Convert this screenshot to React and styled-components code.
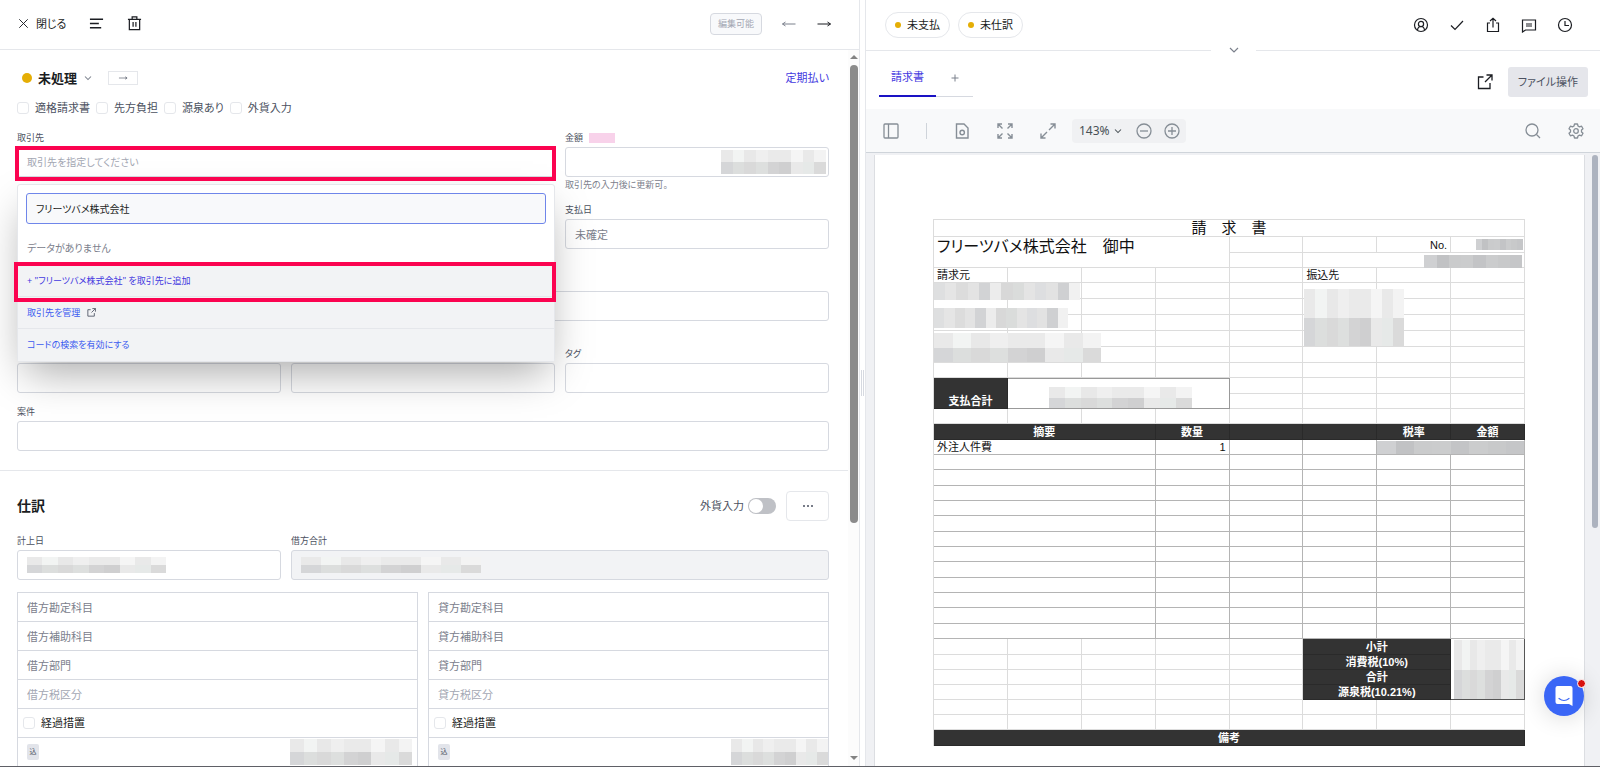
import React, { useState } from "react";
import styled, { createGlobalStyle, css } from "styled-components";

const colors = {
  black: "#1b1d22",
  text: "#4b5160",
  muted: "#7b808c",
  placeholder: "#a3a7b3",
  line: "#e5e7eb",
  border: "#d6d9e0",
  fill: "#f2f3f5",
  link: "#4338e0",
  blue: "#3b5bf0",
  amber: "#e5ae05",
  marker: "#fb0350",
  sheetDark: "#333333",
};

const GlobalStyle = createGlobalStyle`
  *, *::before, *::after {
    box-sizing: border-box;
  }
  body {
    margin: 0;
    background: #fff;
    color: ${colors.text};
    font-family: "Noto Sans", "Noto Sans CJK JP", sans-serif;
    font-size: 11px;
    line-height: 16px;
    font-feature-settings: "palt";
  }
  button, input {
    font: inherit;
    color: inherit;
    font-feature-settings: inherit;
  }
`;

/* ---------- shared ---------- */

const Svg = styled.svg`
  display: block;
  flex: none;
  width: ${({ $size }) => $size || 16}px;
  height: ${({ $size }) => $size || 16}px;
  fill: none;
  stroke: currentColor;
  stroke-width: ${({ $stroke }) => $stroke || 1};
`;

const icons = {
  close: <path d="M3.500 3.500l9 9M12.500 3.500l-9 9" />,
  lines: <path d="M1 3.500h14M1 8h9.500M1 12.500h12" />,
  trash: (
    <path d="M2.500 4v10.500h11V4M1 3.500h14M5.500 3V1h5v2M6.500 6.500v5M9.500 6.500v5" />
  ),
  left: <path d="M1.500 8h13M4.500 6L1.500 8l3 2" />,
  right: <path d="M1.500 8h13M11.500 6l3 2-3 2" />,
  down: <path d="M4 6l4 4 4-4" />,
  user: (
    <>
      <circle cx="8" cy="8" r="6.500" />
      <circle cx="8" cy="7" r="2.600" />
      <path d="M4.500 13c.3-2.400 1.500-3.500 3.500-3.500s3.200 1.100 3.500 3.500" />
    </>
  ),
  check: <path d="M2 8.500l4 4 8-8.500" />,
  share: <path d="M5 6H2.500v8.500h11V6H11M8 10.500V1.500M5 4l3-2.800L11 4" />,
  comment: (
    <path d="M1.500 3h13v10h-10l-3 2V3zM5 7h6M5 9h6" />
  ),
  clock: (
    <>
      <circle cx="8" cy="8" r="6.500" />
      <path d="M8 4v4.500h4" />
    </>
  ),
  external: <path d="M6.500 3H1.500v11.500H13V9M9.500 1H15v5.500M15 1L8 8" />,
  plus: <path d="M4.500 8h7M8 4.500v7" />,
  sidebar: (
    <>
      <rect x="1" y="1" width="14" height="14" rx="1" />
      <path d="M5.500 1v14" />
    </>
  ),
  page: (
    <>
      <path d="M2.500 1H10l4 4v10H2.500z" />
      <circle cx="8.200" cy="9.500" r="2.200" />
    </>
  ),
  fit: (
    <path d="M1 5V1h4M11 1h4v4M15 11v4h-4M5 15H1v-4M1.500 1.500l4 4M14.500 1.500l-4 4M14.500 14.500l-4-4M1.500 14.500l4-4" />
  ),
  expand: (
    <path d="M10.500 1H15v4.500M1 10.500V15h4.500M14.500 1.500L9 7M1.500 14.500L7 9" />
  ),
  zoomOut: (
    <>
      <circle cx="8" cy="8" r="7" />
      <path d="M4 8h8" />
    </>
  ),
  zoomIn: (
    <>
      <circle cx="8" cy="8" r="7" />
      <path d="M4 8h8M8 4v8" />
    </>
  ),
  search: (
    <>
      <circle cx="7" cy="7" r="6" />
      <path d="M11.500 11.500L15 15" />
    </>
  ),
  gear: (
    <>
      <path
        strokeLinejoin="round"
        d="M6.500 1h3l.5 2 1.500.9 2.100-.7 1.400 2.500L13.500 7v2l1.500 1.300-1.400 2.500-2.100-.7L10 13l-.5 2h-3L6 13l-1.500-.9-2.100.7L1 10.300 2.500 9V7L1 5.700l1.400-2.500 2.100.7L6 3z"
      />
      <circle cx="8" cy="8" r="2.300" />
    </>
  ),
};

const Icon = ({ name, size, stroke }) => (
  <Svg viewBox="0 0 16 16" $size={size} $stroke={stroke} aria-hidden="true">
    {icons[name]}
  </Svg>
);

const IconButton = styled.button`
  display: flex;
  align-items: center;
  gap: 5px;
  padding: 0;
  border: 0;
  background: none;
  color: ${({ $color }) => $color || colors.black};
`;

const Dot = styled.span`
  flex: none;
  width: ${({ $size }) => $size}px;
  height: ${({ $size }) => $size}px;
  border-radius: 50%;
  background: ${colors.amber};
`;

/* Hidden values are drawn as rows of flat grey tiles. */
const MosaicBox = styled.span`
  display: flex;
  flex-direction: column;
  width: ${({ $w }) => $w}px;
  height: ${({ $h }) => $h}px;
  ${({ $over, $x, $y }) =>
    $over &&
    css`
      position: absolute;
      z-index: 1;
      left: ${$x}px;
      top: ${$y}px;
    `}
`;

const MosaicRow = styled.span`
  flex: 1;
  display: flex;
`;

const Tile = styled.span`
  flex: 1;
  background: ${({ $tone }) => $tone};
`;

const light = "#e9e9e9 #f2f4f3 #e8e8e8 #efefef #eaeaea #eaeaea #f5f5f5 #e9e9e9 #f3f3f3".split(" ");
const dark = "#d5d6d8 #dcdedd #d9d9d9 #dddfde #d3d3d4 #cfcfd0 #e9e9e9 #e6e9e8 #dadada".split(" ");
const soft = "#dedfe0 #e5e5e5 #dcdcdc #e3e3e3 #d2d3d5 #ececec #d8d8d8 #dadcdb #e4e4e4 #dddee0 #e2e2e2 #cfd0d2 #f1f1f1".split(" ");
const solid = "#cfd0d2 #c1c2c4 #cacbcc #cbcccd #c3c4c6 #cbcccd #c8c9ca #c5c6c8".split(" ");

const Mosaic = ({ rows = [light, dark], ...rest }) => (
  <MosaicBox {...rest}>
    {rows.map((row, i) => (
      <MosaicRow key={i}>
        {row.map((tone, j) => (
          <Tile key={j} $tone={tone} />
        ))}
      </MosaicRow>
    ))}
  </MosaicBox>
);

/* ---------- page frame ---------- */

const Screen = styled.div`
  display: flex;
  height: 100vh;
  overflow: hidden;
  border-bottom: 1px solid #5f6066;
`;

const LeftPane = styled.main`
  display: flex;
  flex-direction: column;
  width: 53.75%;
  min-width: 0;
  border-right: 1px solid ${colors.line};
`;

const RightPane = styled.section`
  display: flex;
  flex-direction: column;
  flex: 1;
  min-width: 0;
  border-left: 1px solid ${colors.line};
`;

const Splitter = styled.div`
  flex: none;
  display: flex;
  align-items: center;
  justify-content: center;
  width: 5px;

  &::after {
    content: "";
    width: 3px;
    height: 26px;
    border: solid ${colors.border};
    border-width: 0 1px;
  }
`;

/* ---------- left pane ---------- */

const LeftHeader = styled.header`
  flex: none;
  display: flex;
  align-items: center;
  height: 50px;
  padding: 0 27px 2px 16px;
  border-bottom: 1px solid ${colors.line};
`;

const HeaderGroup = styled.div`
  display: flex;
  align-items: center;
  gap: ${({ $gap }) => $gap}px;
  ${({ $end }) => $end && "margin-left: auto;"}
`;

const EditBadge = styled.span`
  padding: 1px 7px;
  border: 1px solid ${colors.border};
  border-radius: 4px;
  background: #f8f9fb;
  color: ${colors.placeholder};
  font-size: 9px;
  line-height: 18px;
`;

const ScrollArea = styled.div`
  flex: 1;
  display: flex;
  min-height: 0;
`;

const Content = styled.div`
  flex: 1;
  min-width: 0;
  overflow: hidden;
`;

const Scrollbar = styled.div`
  flex: none;
  display: flex;
  flex-direction: column;
  align-items: center;
  justify-content: space-between;
  width: 11px;
  padding: 5px 0 6px;
  background: #fcfcfc;
`;

const Thumb = styled.div`
  width: ${({ $w }) => $w}px;
  height: ${({ $h }) => $h};
  border-radius: 4px;
  background: ${({ $color }) => $color};
`;

const Caret = styled.span`
  flex: none;
  border: solid transparent;
  border-width: 0 4px;
  ${({ $up }) =>
    $up
      ? "border-bottom: 4px solid #838383; margin-bottom: 6px;"
      : "border-top: 4px solid #838383; margin-top: auto;"}
`;

const Section = styled.section`
  padding: ${({ $top }) => $top}px 19px 19px 17px;
  & + & {
    border-top: 1px solid ${colors.line};
  }
`;

const StatusRow = styled.div`
  display: flex;
  align-items: center;
  height: 18px;
  padding-left: 5px;
`;

const StatusButton = styled.button`
  display: flex;
  align-items: center;
  gap: 6px;
  padding: 0;
  border: 0;
  background: none;
  color: ${colors.black};
  font-size: 13px;
  font-weight: 700;

  svg {
    margin-left: -1px;
    color: ${colors.muted};
  }
`;

const NextButton = styled.button`
  display: flex;
  align-items: center;
  justify-content: center;
  width: 30px;
  height: 14px;
  margin-left: 14px;
  padding: 0;
  border: 1px solid ${colors.line};
  background: #fff;
`;

const TextLink = styled.a`
  color: ${({ $color }) => $color || colors.link};
  text-decoration: none;
  ${({ $end }) => $end && "margin-left: auto;"}
`;

const Checks = styled.div`
  display: flex;
  gap: 6px;
  margin: 13px 0 15px;
`;

const CheckLabel = styled.label`
  display: flex;
  align-items: center;
  gap: 6px;
  color: ${({ $strong }) => ($strong ? colors.black : colors.text)};
`;

const Checkbox = styled.input.attrs({ type: "checkbox" })`
  appearance: none;
  width: 12px;
  height: 12px;
  margin: 0;
  border: 1px solid ${colors.line};
  border-radius: 3px;
  background: #fff;
`;

const FieldGrid = styled.div`
  display: grid;
  grid-template-columns: repeat(3, 1fr);
  column-gap: 10px;
  row-gap: 12px;
`;

const FieldBox = styled.div`
  position: relative;
  grid-column: span ${({ $span }) => $span || 1};
`;

const FieldLabel = styled.label`
  display: flex;
  align-items: center;
  gap: 6px;
  height: 14px;
  margin-bottom: 2px;
  font-size: 9px;
`;

const PinkTag = styled.span`
  width: 26px;
  height: 10px;
  background: #f8d2ea;
`;

const control = css`
  display: flex;
  align-items: center;
  width: 100%;
  height: 30px;
  padding: 0 9px;
  border: 1px solid ${colors.border};
  border-radius: 3px;
  background: ${({ $filled }) => ($filled ? colors.fill : "#fff")};
  text-align: left;
`;

const TextInput = styled.input`
  ${control}
  &::placeholder {
    color: ${colors.muted};
  }
`;

const ValueBox = styled.div`
  ${control}
  ${({ $right }) => $right && "justify-content: flex-end; padding: 0 2px;"}
`;

const SelectButton = styled.button`
  ${control}
  color: ${colors.placeholder};
  font-size: 10px;
`;

const Hint = styled.div`
  height: 14px;
  color: ${colors.muted};
  font-size: 9px;
  line-height: 16px;
`;

const Anchor = styled.div`
  position: relative;
`;

const Marker = styled.span`
  position: absolute;
  z-index: 3;
  inset: ${({ $inset }) => $inset};
  border: 4px solid ${colors.marker};
  pointer-events: none;
`;

const Dropdown = styled.div`
  position: absolute;
  z-index: 2;
  top: 37px;
  left: 0;
  right: 0;
  border: 1px solid ${colors.line};
  border-radius: 3px;
  background: #fff;
  box-shadow: 0 18px 40px -8px rgba(0, 0, 0, 0.34);
`;

const DropdownSearch = styled.div`
  padding: 8px;
`;

const SearchInput = styled.input`
  ${control}
  height: 31px;
  border-color: #6f86ea;
  background: #f8f9fb;
  color: ${colors.black};
  font-size: 10px;
  outline: 0;
`;

const Empty = styled.div`
  padding: 8px 9px 9px;
  color: ${colors.muted};
  font-size: 10px;
`;

const Option = styled.div`
  position: relative;
  display: flex;
  align-items: center;
  gap: 7px;
  height: 32px;
  padding: 0 9px;
  border-bottom: 1px solid ${colors.line};
  background: ${colors.fill};
  font-size: 9px;

  &:last-child {
    border-bottom: 0;
  }
`;

const OptionButton = styled.button`
  padding: 0;
  border: 0;
  background: none;
  color: ${({ $color }) => $color || colors.blue};
`;

const SectionHead = styled.div`
  display: flex;
  align-items: center;
  height: 30px;
  margin-bottom: 13px;
`;

const Heading = styled.h2`
  margin: 0 auto 0 0;
  color: ${colors.black};
  font-size: 14px;
`;

const SwitchLabel = styled.label`
  display: flex;
  align-items: center;
  gap: 4px;
`;

const Switch = styled.input.attrs({ type: "checkbox", role: "switch" })`
  appearance: none;
  width: 28px;
  height: 16px;
  margin: 0;
  padding: 1px;
  border-radius: 8px;
  background: #bfc1c6;

  &::before {
    content: "";
    display: block;
    width: 14px;
    height: 14px;
    border-radius: 50%;
    background: #fff;
  }
`;

const MoreButton = styled.button`
  display: flex;
  align-items: center;
  justify-content: center;
  gap: 2px;
  width: 43px;
  height: 30px;
  margin-left: 10px;
  border: 1px solid ${colors.line};
  border-radius: 4px;
  background: #fff;

  span {
    width: 2px;
    height: 2px;
    border-radius: 50%;
    background: ${colors.text};
  }
`;

const EntryGrid = styled.div`
  display: grid;
  grid-template-columns: 1fr 1fr;
  gap: 10px;
  margin-top: 12px;
`;

const EntryColumn = styled.div`
  border: 1px solid ${colors.border};
`;

const entryLine = css`
  display: flex;
  align-items: center;
  width: 100%;
  height: 29px;
  border: 0;
  border-bottom: 1px solid ${colors.border};
`;

const EntryInput = styled.input`
  ${entryLine}
  padding: 0 9px;
  &::placeholder {
    color: ${({ $faint }) => ($faint ? colors.placeholder : colors.muted)};
  }
`;

const EntryLine = styled.div`
  ${entryLine}
  justify-content: space-between;
  padding: 0 ${({ $right }) => $right || 0}px 0 ${({ $left }) => $left}px;
`;

const TaxBadge = styled.span`
  width: 12px;
  border-radius: 2px;
  background: #e2e4ea;
  font-size: 7px;
  text-align: center;
`;

const Field = ({ id, label, span, hint, children }) => (
  <FieldBox $span={span}>
    <FieldLabel htmlFor={id}>{label}</FieldLabel>
    {children || <TextInput id={id} />}
    {hint !== undefined && <Hint>{hint}</Hint>}
  </FieldBox>
);

const PartnerSelect = () => {
  const [keyword, setKeyword] = useState("フリーツバメ株式会社");

  return (
    <Anchor>
      <SelectButton id="partner" aria-haspopup="listbox" aria-expanded="true">
        取引先を指定してください
      </SelectButton>
      <Marker $inset="-1px -1px -4px -2px" />
      <Dropdown>
        <DropdownSearch>
          <SearchInput
            aria-label="取引先"
            value={keyword}
            onChange={(e) => setKeyword(e.target.value)}
          />
        </DropdownSearch>
        <Empty>データがありません</Empty>
        <Option>
          <OptionButton $color={colors.link}>
            + "{keyword}" を取引先に追加
          </OptionButton>
          <Marker $inset="-3px -2px -6px -4px" />
        </Option>
        <Option>
          <TextLink href="#partners" $color={colors.blue}>
            取引先を管理
          </TextLink>
          <Icon name="external" size={9} stroke={1.5} />
        </Option>
        <Option>
          <OptionButton>コードの検索を有効にする</OptionButton>
        </Option>
      </Dropdown>
    </Anchor>
  );
};

const Entry = ({ side, mosaicWidth, right }) => (
  <EntryColumn>
    {["勘定科目", "補助科目", "部門", "税区分"].map((name) => (
      <EntryInput
        key={name}
        aria-label={side + name}
        placeholder={side + name}
        $faint={name === "税区分"}
      />
    ))}
    <EntryLine $left={5}>
      <CheckLabel $strong>
        <Checkbox />
        経過措置
      </CheckLabel>
    </EntryLine>
    <EntryLine $left={9} $right={right}>
      <TaxBadge>込</TaxBadge>
      <Mosaic $w={mosaicWidth} $h={26} />
    </EntryLine>
  </EntryColumn>
);

const LeftSide = () => (
  <LeftPane>
    <LeftHeader>
      <HeaderGroup $gap={23}>
        <IconButton>
          <Icon name="close" size={15} />
          閉じる
        </IconButton>
        <IconButton aria-label="メニュー">
          <Icon name="lines" size={15} stroke={1.5} />
        </IconButton>
        <IconButton aria-label="削除">
          <Icon name="trash" size={15} stroke={1.3} />
        </IconButton>
      </HeaderGroup>
      <HeaderGroup $gap={19} $end>
        <EditBadge>編集可能</EditBadge>
        <IconButton aria-label="前へ" $color={colors.muted}>
          <Icon name="left" />
        </IconButton>
        <IconButton aria-label="次へ">
          <Icon name="right" />
        </IconButton>
      </HeaderGroup>
    </LeftHeader>

    <ScrollArea>
      <Content>
        <Section $top={19}>
          <StatusRow>
            <StatusButton>
              <Dot $size={10} />
              未処理
              <Icon name="down" size={12} stroke={1.4} />
            </StatusButton>
            <NextButton aria-label="進める">
              <Icon name="right" size={10} />
            </NextButton>
            <TextLink href="#recurring" $end>
              定期払い
            </TextLink>
          </StatusRow>
          <Checks>
            {["適格請求書", "先方負担", "源泉あり", "外貨入力"].map((name) => (
              <CheckLabel key={name}>
                <Checkbox />
                {name}
              </CheckLabel>
            ))}
          </Checks>
          <FieldGrid>
            <Field id="partner" label="取引先" span={2} hint="">
              <PartnerSelect />
            </Field>
            <Field
              label={
                <>
                  金額
                  <PinkTag />
                </>
              }
              hint="取引先の入力後に更新可。"
            >
              <ValueBox $right>
                <Mosaic $w={105} $h={24} />
              </ValueBox>
            </Field>
            <FieldBox $span={2} />
            <Field id="payday" label="支払日" hint="">
              <TextInput id="payday" placeholder="未確定" />
            </Field>
            <Field id="memo" span={3} hint="" />
            <Field id="owner" />
            <Field id="dept" />
            <Field id="tag" label="タグ" />
            <Field id="project" label="案件" span={3} />
          </FieldGrid>
        </Section>

        <Section $top={20}>
          <SectionHead>
            <Heading>仕訳</Heading>
            <SwitchLabel>
              外貨入力
              <Switch />
            </SwitchLabel>
            <MoreButton aria-label="その他">
              <span />
              <span />
              <span />
            </MoreButton>
          </SectionHead>
          <FieldGrid>
            <Field label="計上日">
              <ValueBox>
                <Mosaic $w={139} $h={16} />
              </ValueBox>
            </Field>
            <Field label="借方合計" span={2}>
              <ValueBox $filled>
                <Mosaic $w={180} $h={16} />
              </ValueBox>
            </Field>
          </FieldGrid>
          <EntryGrid>
            <Entry side="借方" mosaicWidth={122} right={5} />
            <Entry side="貸方" mosaicWidth={97} />
          </EntryGrid>
        </Section>
      </Content>
      <Scrollbar>
        <Caret $up />
        <Thumb $w={8} $h="65%" $color="#8b8b8b" />
        <Caret />
      </Scrollbar>
    </ScrollArea>
  </LeftPane>
);

/* ---------- right pane ---------- */

const RightHeader = styled.header`
  position: relative;
  flex: none;
  display: flex;
  align-items: center;
  gap: 8px;
  height: 51px;
  padding: 0 27px 0 19px;
  border-bottom: 1px solid ${colors.line};
`;

const Chip = styled.span`
  display: flex;
  align-items: center;
  gap: 6px;
  height: 26px;
  padding: 0 9px;
  border: 1px solid ${colors.line};
  border-radius: 13px;
  color: ${colors.black};
`;

const Collapse = styled.button`
  position: absolute;
  left: 50%;
  bottom: -8px;
  display: flex;
  justify-content: center;
  width: 45px;
  margin-left: -22px;
  padding: 0;
  border: 0;
  background: #fff;
  color: ${colors.muted};
`;

const TabBar = styled.div`
  flex: none;
  display: flex;
  align-items: center;
  gap: 15px;
  height: 58px;
  padding: 4px 12px 0 13px;
`;

const Tabs = styled.div`
  display: flex;
  align-self: flex-start;
  height: 42px;
  margin-right: auto;
  padding-top: 4px;
`;

const Tab = styled.button`
  padding: 0 12px;
  border: 0;
  border-bottom: 2px solid #1a12c4;
  background: none;
  color: ${colors.link};
`;

const AddTab = styled(IconButton)`
  width: 37px;
  justify-content: center;
  border-bottom: 1px solid ${colors.border};
`;

const FileButton = styled.button`
  height: 30px;
  padding: 0 10px;
  border: 0;
  border-radius: 3px;
  background: #e5e6eb;
  color: ${colors.text};
`;

const Toolbar = styled.div`
  flex: none;
  display: flex;
  align-items: center;
  gap: 27px;
  height: 44px;
  padding: 0 16px 0 17px;
  border-bottom: 1px solid #cfd4da;
  background: #f8f9fa;
  color: #868e96;
`;

const Divider = styled.span`
  width: 1px;
  height: 16px;
  background: #cfd4da;
`;

const ZoomGroup = styled.div`
  display: flex;
  align-items: center;
  gap: 12px;
  height: 24px;
  margin: 0 auto 0 -11px;
  padding: 0 6px 0 7px;
  border-radius: 4px;
  background: #f0f1f3;
`;

const ZoomValue = styled.button`
  display: flex;
  align-items: center;
  gap: 2px;
  padding: 0;
  border: 0;
  background: none;
  color: #485056;
  font-size: 12px;
`;

const Viewer = styled.div`
  flex: 1;
  display: flex;
  min-height: 0;
  padding: 2px 2px 0 8px;
  overflow: hidden;
  background: #f0f1f4;
`;

const Paper = styled.div`
  flex: 1;
  min-width: 0;
  margin-right: 7px;
  padding: 64px 59px 0 58px;
  border: solid #dcdee2;
  border-width: 0 1px;
  background: #fff;
`;

const Sheet = styled.table`
  width: 100%;
  table-layout: fixed;
  border-spacing: 0;
  border: solid #dcdcdc;
  border-width: 1px 0 0 1px;
  color: #111;
  font-family: "Liberation Sans", "Noto Sans CJK JP", sans-serif;
  font-size: 11px;
  line-height: 14px;
`;

const Row = styled.tr`
  height: ${({ $h }) => $h || 15}px;
`;

const Cell = styled.td`
  position: relative;
  height: inherit;
  padding: 0 3px;
  border: solid ${({ $line }) => $line || "#dcdcdc"};
  border-width: ${({ $boxed }) => ($boxed ? 1 : 0)}px 1px 1px 0;
  white-space: nowrap;
  vertical-align: ${({ $valign }) => $valign || "middle"};
  text-align: ${({ $align }) => $align || "left"};
  ${({ $size, $lead }) =>
    $size && `font-size: ${$size}px; line-height: ${$lead}px;`}
  ${({ $dark }) =>
    $dark &&
    css`
      border-color: #2a2a2a;
      background: ${colors.sheetDark};
      color: #fff;
      font-weight: 700;
      text-align: center;
    `}
`;

const ChatButton = styled.button`
  position: fixed;
  z-index: 4;
  right: 16px;
  bottom: 51px;
  display: flex;
  align-items: center;
  justify-content: center;
  width: 40px;
  height: 40px;
  padding: 0;
  border: 0;
  border-radius: 50%;
  background: #3a66f6;
  box-shadow: 0 1px 24px rgba(0, 0, 0, 0.16);
`;

const Unread = styled.span`
  position: absolute;
  top: 3px;
  right: -2px;
  width: 9px;
  height: 9px;
  border: 1px solid #fff;
  border-radius: 50%;
  background: #d9100c;
`;

const grid = "#b4b4b4";
const blanks = (n, line) =>
  Array.from({ length: n }, (_, i) => <Cell key={i} $line={line} />);

const BlankRow = ({ h }) => <Row $h={h}>{blanks(8)}</Row>;

const Invoice = () => (
  <Sheet>
    <tbody>
      <Row $h={17}>
        <Cell colSpan={8} $align="center" $size={15} $lead={16}>
          請　求　書
        </Cell>
      </Row>
      <Row $h={16}>
        <Cell colSpan={4} rowSpan={2} $valign="top" $size={16} $lead={20}>
          フリーツバメ株式会社　御中
        </Cell>
        {blanks(2)}
        <Cell $align="right">No.</Cell>
        <Cell>
          <Mosaic $over $x={25} $y={2} $w={47} $h={11} rows={[solid]} />
        </Cell>
      </Row>
      <Row>
        {blanks(1)}
        <Cell colSpan={3}>
          <Mosaic $over $x={121} $y={2} $w={98} $h={13} rows={[solid]} />
        </Cell>
      </Row>
      <Row>
        <Cell>請求元</Cell>
        {blanks(4)}
        <Cell>振込先</Cell>
        {blanks(2)}
      </Row>
      <Row $h={16}>
        <Cell>
          <Mosaic $over $x={0} $y={0} $w={146} $h={17} rows={[soft, soft]} />
          <Mosaic $over $x={0} $y={25} $w={134} $h={20} rows={[soft, soft]} />
          <Mosaic $over $x={0} $y={50} $w={167} $h={29} />
        </Cell>
        {blanks(4)}
        <Cell>
          <Mosaic $over $x={1} $y={6} $w={100} $h={57} />
        </Cell>
        {blanks(2)}
      </Row>
      <BlankRow h={16} />
      <BlankRow h={16} />
      <BlankRow h={16} />
      <BlankRow h={16} />
      <BlankRow h={15} />
      <Row $h={16}>
        <Cell $dark rowSpan={2} $valign="bottom">
          支払合計
        </Cell>
        <Cell colSpan={3} rowSpan={2} $line="#999" $boxed>
          <Mosaic $over $x={41} $y={8} $w={143} $h={21} />
        </Cell>
        {blanks(4)}
      </Row>
      <Row>{blanks(4)}</Row>
      <BlankRow />
      <Row $h={16}>
        <Cell $dark colSpan={3}>
          摘要
        </Cell>
        <Cell $dark>数量</Cell>
        <Cell $dark />
        <Cell $dark />
        <Cell $dark>税率</Cell>
        <Cell $dark>金額</Cell>
      </Row>
      <Row>
        <Cell colSpan={3} $line={grid}>
          外注人件費
        </Cell>
        <Cell $align="right" $line={grid}>
          1
        </Cell>
        {blanks(2, grid)}
        <Cell colSpan={2} $line={grid}>
          <Mosaic $over $x={0} $y={1} $w={147} $h={13} rows={[solid]} />
        </Cell>
      </Row>
      {Array.from({ length: 12 }, (_, i) => (
        <Row key={i} $h={i % 3 === 1 ? 16 : 15}>
          <Cell colSpan={3} $line={grid} />
          {blanks(5, grid)}
        </Row>
      ))}
      {["小計", "消費税(10%)", "合計", "源泉税(10.21%)"].map((name, i) => (
        <Row key={name} $h={i === 0 ? 16 : 15}>
          {blanks(5)}
          <Cell colSpan={2} $dark>
            {name}
          </Cell>
          {i === 0 && (
            <Cell rowSpan={4} $line="#555">
              <Mosaic $over $x={3} $y={1} $w={70} $h={59} />
            </Cell>
          )}
        </Row>
      ))}
      <BlankRow />
      <BlankRow />
      <Row $h={16}>
        <Cell $dark colSpan={8}>
          備考
        </Cell>
      </Row>
    </tbody>
  </Sheet>
);

const actions = [
  ["user", "担当者"],
  ["check", "承認"],
  ["share", "共有"],
  ["comment", "コメント"],
  ["clock", "履歴"],
];

const tools = [
  ["page", "ページ設定"],
  ["fit", "全体表示"],
  ["expand", "拡大表示"],
];

const RightSide = () => (
  <RightPane>
    <RightHeader>
      {["未支払", "未仕訳"].map((name) => (
        <Chip key={name}>
          <Dot $size={6} />
          {name}
        </Chip>
      ))}
      <HeaderGroup $gap={20} $end>
        {actions.map(([icon, label]) => (
          <IconButton key={icon} aria-label={label}>
            <Icon name={icon} stroke={1.2} />
          </IconButton>
        ))}
      </HeaderGroup>
      <Collapse aria-label="折りたたむ">
        <Icon name="down" stroke={1.2} />
      </Collapse>
    </RightHeader>

    <TabBar>
      <Tabs>
        <Tab>請求書</Tab>
        <AddTab aria-label="タブを追加" $color={colors.muted}>
          <Icon name="plus" />
        </AddTab>
      </Tabs>
      <IconButton aria-label="別ウィンドウで開く">
        <Icon name="external" stroke={1.3} />
      </IconButton>
      <FileButton>ファイル操作</FileButton>
    </TabBar>

    <Toolbar>
      <IconButton aria-label="サイドバー" $color="inherit">
        <Icon name="sidebar" stroke={1.3} />
      </IconButton>
      <Divider />
      {tools.map(([icon, label]) => (
        <IconButton key={icon} aria-label={label} $color="inherit">
          <Icon name={icon} stroke={1.4} />
        </IconButton>
      ))}
      <ZoomGroup>
        <ZoomValue>
          143%
          <Icon name="down" size={12} stroke={1.4} />
        </ZoomValue>
        <IconButton aria-label="縮小" $color="inherit">
          <Icon name="zoomOut" stroke={1.3} />
        </IconButton>
        <IconButton aria-label="拡大" $color="inherit">
          <Icon name="zoomIn" stroke={1.3} />
        </IconButton>
      </ZoomGroup>
      <IconButton aria-label="検索" $color="inherit">
        <Icon name="search" stroke={1.3} />
      </IconButton>
      <IconButton aria-label="設定" $color="inherit">
        <Icon name="gear" stroke={1.3} />
      </IconButton>
    </Toolbar>

    <Viewer>
      <Paper>
        <Invoice />
      </Paper>
      <Thumb $w={6} $h="61%" $color="#adb3bf" />
    </Viewer>
  </RightPane>
);

export default function App() {
  return (
    <>
      <GlobalStyle />
      <Screen>
        <LeftSide />
        <Splitter />
        <RightSide />
      </Screen>
      <ChatButton aria-label="チャット">
        <svg width="20" height="20" viewBox="0 0 20 20" aria-hidden="true">
          <path
            fill="#fff"
            d="M3.500 0h13A2 2 0 0 1 18.500 2v18l-3.500-2H3.500a2 2 0 0 1-2-2V2a2 2 0 0 1 2-2z"
          />
          <path
            fill="none"
            stroke="#3a66f6"
            strokeWidth="1.200"
            strokeLinecap="round"
            d="M5 12.500c3 2.400 7 2.400 10 0"
          />
        </svg>
        <Unread />
      </ChatButton>
    </>
  );
}
